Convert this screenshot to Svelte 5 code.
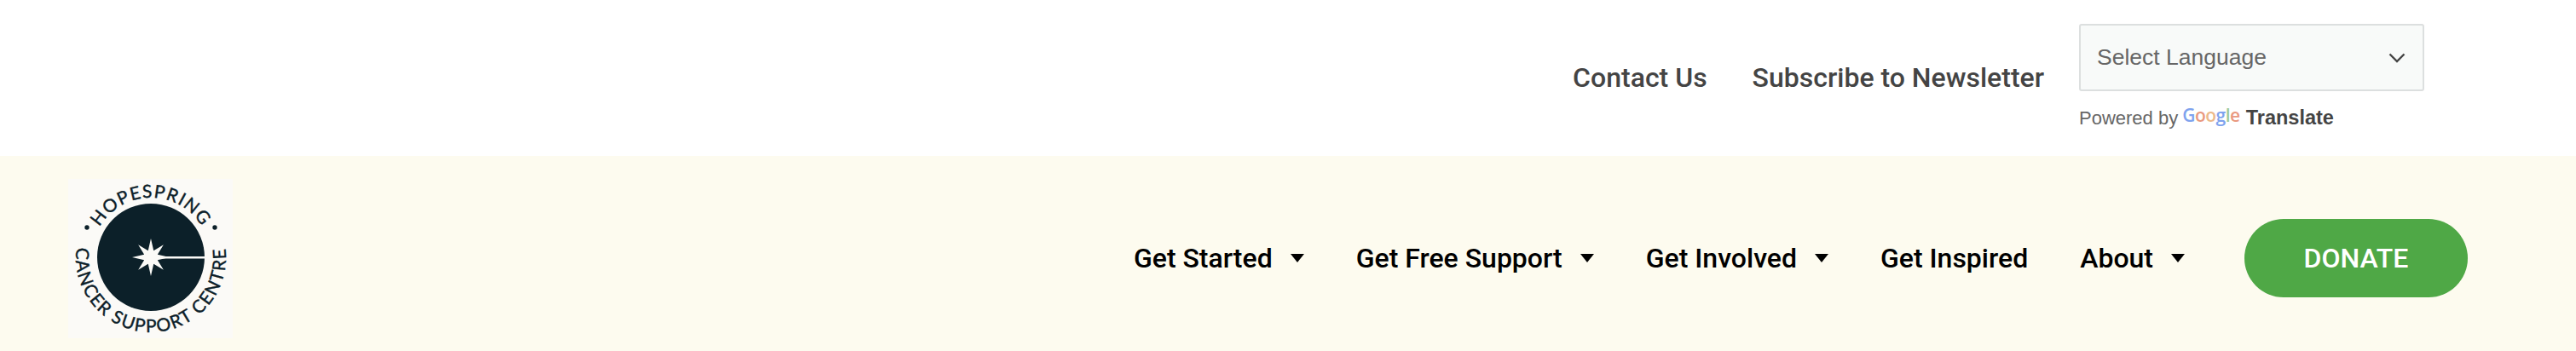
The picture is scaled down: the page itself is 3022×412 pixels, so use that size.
<script>
  const navItems = [
    { label: 'Get Started', caret: true },
    { label: 'Get Free Support', caret: true },
    { label: 'Get Involved', caret: true },
    { label: 'Get Inspired', caret: false },
    { label: 'About', caret: true }
  ];
  const starPoints = (() => {
    const pts = [];
    for (let i = 0; i < 16; i++) {
      const a = (i * Math.PI) / 8 - Math.PI / 2;
      const r = i % 2 === 0 ? (i % 4 === 0 ? 22 : 21) : 8.5;
      pts.push(`${(r * Math.cos(a)).toFixed(2)},${(r * Math.sin(a)).toFixed(2)}`);
    }
    return pts.join(' ');
  })();
  const googleLetters = [
    ['G', '#7fa3ee'], ['o', '#e9997f'], ['o', '#ecb98a'], ['g', '#7fa3ee'], ['l', '#9cc99a'], ['e', '#e9997f']
  ];
</script>

<div class="page">
  <header class="top">
    <a class="toplink contact" href="#contact">Contact Us</a>
    <a class="toplink" href="#news">Subscribe to Newsletter</a>
    <div class="translate">
      <div class="select">
        <span>Select Language</span>
        <svg width="20" height="12" viewBox="0 0 20 12" fill="none" stroke="#444" stroke-width="2.4"><path d="M1.5 1.5 10 10l8.500-8.500" /></svg>
      </div>
      <div class="powered">
        <span>Powered by</span>
        <span class="google">{#each googleLetters as [ch, col]}<span style:color={col}>{ch}</span>{/each}</span>
        <b>Translate</b>
      </div>
    </div>
  </header>

  <div class="bar">
    <svg class="logo" width="193" height="187" viewBox="0 0 193 187" role="img" aria-label="Hopespring Cancer Support Centre">
      <rect width="193" height="187" fill="#fbfaf7" />
      <defs>
        <path id="arcTop" d="M27 92 a70 70 0 0 1 140 0" />
        <path id="arcBottom" d="M20.800 48 A88 88 0 1 0 173.200 48" />
      </defs>
      <circle cx="97" cy="92" r="63" fill="#0c2029" />
      <rect x="108" y="91" width="52" height="2.500" fill="#fbfaf7" />
      <polygon points={starPoints} transform="translate(97 92)" fill="#fbfaf7" />
      <circle cx="22" cy="57" r="2.700" fill="#0c2029" />
      <circle cx="172" cy="57" r="2.700" fill="#0c2029" />
      <text class="ring top-ring"><textPath href="#arcTop" startOffset="50%" text-anchor="middle">HOPESPRING</textPath></text>
      <text class="ring"><textPath href="#arcBottom" startOffset="50%" text-anchor="middle">CANCER SUPPORT CENTRE</textPath></text>
    </svg>

    <nav>
      {#each navItems as item}
        <a class="navitem" href="#nav">
          {item.label}
          {#if item.caret}<span class="caret"></span>{/if}
        </a>
      {/each}
      <a class="donate" href="#donate">DONATE</a>
    </nav>
  </div>
</div>

<style>
  :global(body) {
    margin: 0;
    background: #fff;
  }
  .page {
    width: 3022px;
    height: 412px;
    display: flex;
    flex-direction: column;
    overflow: hidden;
    font-family: Roboto, "Liberation Sans", sans-serif;
  }
  a {
    text-decoration: none;
  }
  .top {
    height: 183px;
    box-sizing: border-box;
    display: flex;
    justify-content: flex-end;
    align-items: flex-start;
    padding: 28px 178px 0 0;
  }
  .toplink {
    font-size: 32px;
    line-height: 38px;
    font-weight: 500;
    color: #444;
    margin-top: 44px;
    margin-right: 41px;
  }
  .contact {
    margin-right: 53px;
  }
  .translate {
    width: 405px;
  }
  .select {
    box-sizing: border-box;
    height: 79px;
    background: #f8faf9;
    border: 2px solid #dcdfdf;
    border-radius: 3px;
    display: flex;
    align-items: center;
    justify-content: space-between;
    padding: 0 20px 0 19px;
    font-size: 26.500px;
    color: #666;
    font-family: "Liberation Sans", Arial, sans-serif;
  }
  .powered {
    margin-top: 18px;
    display: flex;
    align-items: center;
    font-family: "Liberation Sans", Arial, sans-serif;
    font-size: 22px;
    color: #666;
    white-space: nowrap;
  }
  .google {
    font-family: "Open Sans", sans-serif;
    font-weight: 600;
    font-size: 21px;
    margin: -7px 7px 0 5px;
    letter-spacing: -0.5px;
  }
  .powered b {
    color: #444;
    font-size: 23.500px;
  }
  .bar {
    flex: 1;
    background: #fdfbef;
    display: flex;
    align-items: center;
    justify-content: space-between;
    padding: 0 127px 0 80px;
  }
  .logo {
    display: block;
    margin-top: 12px;
  }
  .ring {
    font-family: Lato, sans-serif;
    font-size: 21px;
    letter-spacing: 1.500px;
    fill: #0c2029;
    stroke: #0c2029;
    stroke-width: 0.4px;
  }
  .top-ring {
    letter-spacing: 1.300px;
  }
  nav {
    display: flex;
    align-items: center;
    margin-top: 11px;
  }
  .navitem {
    display: flex;
    align-items: center;
    color: #000;
    font-size: 32px;
    font-weight: 500;
    line-height: 40px;
    white-space: nowrap;
    margin-right: 61px;
  }
  .navitem:nth-last-child(2) {
    margin-right: 70px;
  }
  .caret {
    width: 0;
    height: 0;
    margin-left: 21px;
    border-left: 8px solid transparent;
    border-right: 8px solid transparent;
    border-top: 10px solid #000;
  }
  .donate {
    width: 262px;
    height: 92px;
    border-radius: 46px;
    background: #4fa846;
    color: #fff;
    font-size: 32px;
    font-weight: 500;
    display: flex;
    align-items: center;
    justify-content: center;
  }
</style>
